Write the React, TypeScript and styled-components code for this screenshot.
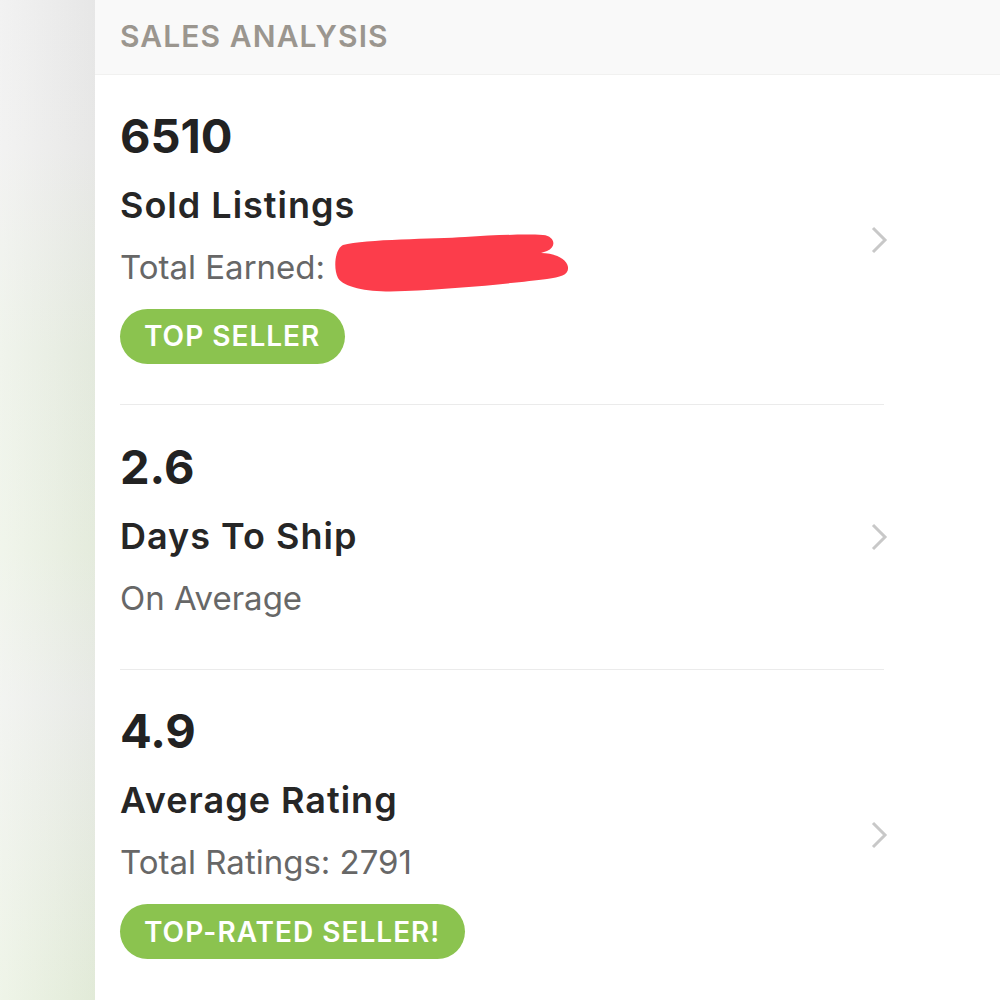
import styled, { createGlobalStyle } from "styled-components";

const Global = createGlobalStyle`
  html, body { margin: 0; padding: 0; background: #ffffff; }
  body { font-family: Inter, "Open Sans", sans-serif; }
`;

const Page = styled.div`
  display: flex;
  width: 1000px;
  height: 1000px;
  overflow: hidden;
`;

const Sidebar = styled.div`
  width: 95px;
  flex-shrink: 0;
  background:
    linear-gradient(to right, rgba(255,255,255,0.35), rgba(0,0,0,0.02)),
    linear-gradient(to bottom, #ebebeb 0%, #ececeb 15%, #e8eee2 35%, #e9f0e1 55%, #eceeea 70%, #e6efdc 100%);
`;

const Main = styled.div`
  flex: 1;
  display: flex;
  flex-direction: column;
  background: #ffffff;
`;

const Header = styled.div`
  height: 75px;
  box-sizing: border-box;
  padding: 18px 0 0 25px;
  background: #f9f9f9;
  border-bottom: 1px solid #f1f1f0;
  color: #9b968f;
  font-size: 30px;
  font-weight: 600;
  letter-spacing: 1.1px;
`;

const Row = styled.div`
  display: flex;
  align-items: center;
  margin: 0 116px 0 25px;
  height: ${({ $h }: { $h: number }) => $h}px;
  box-sizing: border-box;
  border-bottom: 1px solid #ebebeb;
  &:last-child { border-bottom: none; }
`;

const Info = styled.div`
  flex: 1;
  display: flex;
  flex-direction: column;
`;

const Value = styled.div`
  font-size: 47px;
  font-weight: 700;
  color: #222222;
  line-height: 60px;
  margin-top: -10px;
`;

const Label = styled.div`
  font-size: 36px;
  font-weight: 600;
  color: #262626;
  letter-spacing: 1px;
  line-height: 60px;
  margin-top: 9px;
`;

const Sub = styled.div`
  font-size: 33px;
  color: #676767;
  line-height: 60px;
  margin-top: 2px;
`;

const Redacted = styled.span`
  position: relative;
  display: inline-block;
  width: 0;
  height: 0;
`;

const Scribble = styled.svg`
  position: absolute;
  left: 10px;
  top: -46px;
`;

const Badge = styled.div`
  align-self: flex-start;
  margin-top: 12px;
  height: 55px;
  padding: 0 25px 0 24px;
  border-radius: 28px;
  background: #8bc34f;
  color: #ffffff;
  font-size: 28px;
  font-weight: 600;
  letter-spacing: 1px;
  display: flex;
  align-items: center;
`;

const Chevron = styled.svg`
  flex-shrink: 0;
  margin-right: -4px;
`;

function Arrow() {
  return (
    <Chevron width="18" height="28" viewBox="0 0 18 28">
      <polyline points="3,2 15,14 3,26" fill="none" stroke="#c8c8c8" strokeWidth="3" />
    </Chevron>
  );
}

export default function App() {
  return (
    <Page>
      <Global />
      <Sidebar />
      <Main>
        <Header>SALES ANALYSIS</Header>
        <Row $h={330}>
          <Info>
            <Value>6510</Value>
            <Label>Sold Listings</Label>
            <Sub>
              Total Earned:
              <Redacted>
                <Scribble width="240" height="62" viewBox="0 0 240 62">
                  <path
                    d="M8 12 C30 6 100 6 130 4 C160 2 190 1 208 2 C220 3 222 14 212 18 L206 20 C220 20 232 26 233 34 C234 42 226 44 212 46 C180 50 120 56 70 58 C40 60 10 56 3 45 C-2 35 0 16 8 12 Z"
                    fill="#fc3d4b"
                  />
                </Scribble>
              </Redacted>
            </Sub>
            <Badge>TOP SELLER</Badge>
          </Info>
          <Arrow />
        </Row>
        <Row $h={265}>
          <Info>
            <Value>2.6</Value>
            <Label>Days To Ship</Label>
            <Sub>On Average</Sub>
          </Info>
          <Arrow />
        </Row>
        <Row $h={330}>
          <Info>
            <Value>4.9</Value>
            <Label>Average Rating</Label>
            <Sub>Total Ratings: 2791</Sub>
            <Badge>TOP-RATED SELLER!</Badge>
          </Info>
          <Arrow />
        </Row>
      </Main>
    </Page>
  );
}
